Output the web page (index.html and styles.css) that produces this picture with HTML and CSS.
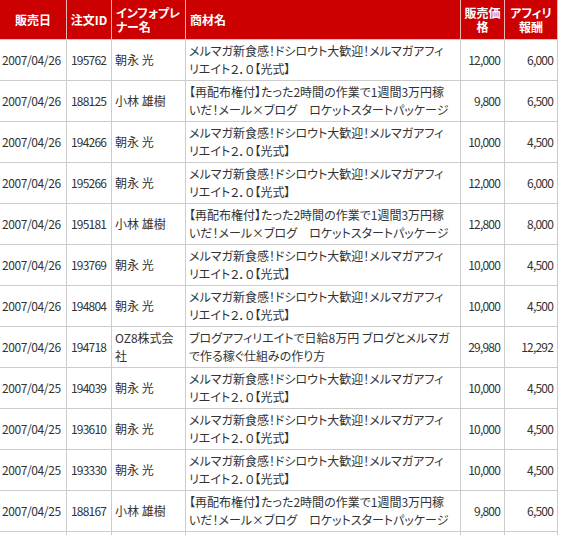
FILE: index.html
```html
<!DOCTYPE html>
<html lang="ja">
<head>
<meta charset="utf-8">
<title>販売履歴</title>
<link rel="stylesheet" href="styles.css">
</head>
<body>
<table class="orders">
  <colgroup>
    <col class="c-date">
    <col class="c-id">
    <col class="c-name">
    <col class="c-item">
    <col class="c-price">
    <col class="c-fee">
  </colgroup>
  <thead>
    <tr>
      <th class="h-center">販売日</th>
      <th class="h-center">注文ID</th>
      <th class="h-left">インフォプレ<br>ナー名</th>
      <th class="h-left">商材名</th>
      <th class="h-center">販売価<br>格</th>
      <th class="h-center">アフィリ<br>報酬</th>
    </tr>
  </thead>
  <tbody>
    <tr>
      <td class="date">2007/04/26</td><td class="id">195762</td><td class="name">朝永 光</td>
      <td class="item">メルマガ新食感！ドシロウト大歓迎！メルマガアフィ<br>リエイト２．０【光式】</td>
      <td class="num">12,000</td><td class="num">6,000</td>
    </tr>
    <tr>
      <td class="date">2007/04/26</td><td class="id">188125</td><td class="name">小林 雄樹</td>
      <td class="item">【再配布権付】たった2時間の作業で1週間3万円稼<br>いだ！メール×ブログ　ロケットスタートパッケージ</td>
      <td class="num">9,800</td><td class="num">6,500</td>
    </tr>
    <tr>
      <td class="date">2007/04/26</td><td class="id">194266</td><td class="name">朝永 光</td>
      <td class="item">メルマガ新食感！ドシロウト大歓迎！メルマガアフィ<br>リエイト２．０【光式】</td>
      <td class="num">10,000</td><td class="num">4,500</td>
    </tr>
    <tr>
      <td class="date">2007/04/26</td><td class="id">195266</td><td class="name">朝永 光</td>
      <td class="item">メルマガ新食感！ドシロウト大歓迎！メルマガアフィ<br>リエイト２．０【光式】</td>
      <td class="num">12,000</td><td class="num">6,000</td>
    </tr>
    <tr>
      <td class="date">2007/04/26</td><td class="id">195181</td><td class="name">小林 雄樹</td>
      <td class="item">【再配布権付】たった2時間の作業で1週間3万円稼<br>いだ！メール×ブログ　ロケットスタートパッケージ</td>
      <td class="num">12,800</td><td class="num">8,000</td>
    </tr>
    <tr>
      <td class="date">2007/04/26</td><td class="id">193769</td><td class="name">朝永 光</td>
      <td class="item">メルマガ新食感！ドシロウト大歓迎！メルマガアフィ<br>リエイト２．０【光式】</td>
      <td class="num">10,000</td><td class="num">4,500</td>
    </tr>
    <tr>
      <td class="date">2007/04/26</td><td class="id">194804</td><td class="name">朝永 光</td>
      <td class="item">メルマガ新食感！ドシロウト大歓迎！メルマガアフィ<br>リエイト２．０【光式】</td>
      <td class="num">10,000</td><td class="num">4,500</td>
    </tr>
    <tr>
      <td class="date">2007/04/26</td><td class="id">194718</td><td class="name">OZ8株式会<br>社</td>
      <td class="item">ブログアフィリエイトで日給8万円 ブログとメルマガ<br>で作る稼ぐ仕組みの作り方</td>
      <td class="num">29,980</td><td class="num">12,292</td>
    </tr>
    <tr>
      <td class="date">2007/04/25</td><td class="id">194039</td><td class="name">朝永 光</td>
      <td class="item">メルマガ新食感！ドシロウト大歓迎！メルマガアフィ<br>リエイト２．０【光式】</td>
      <td class="num">10,000</td><td class="num">4,500</td>
    </tr>
    <tr>
      <td class="date">2007/04/25</td><td class="id">193610</td><td class="name">朝永 光</td>
      <td class="item">メルマガ新食感！ドシロウト大歓迎！メルマガアフィ<br>リエイト２．０【光式】</td>
      <td class="num">10,000</td><td class="num">4,500</td>
    </tr>
    <tr>
      <td class="date">2007/04/25</td><td class="id">193330</td><td class="name">朝永 光</td>
      <td class="item">メルマガ新食感！ドシロウト大歓迎！メルマガアフィ<br>リエイト２．０【光式】</td>
      <td class="num">10,000</td><td class="num">4,500</td>
    </tr>
    <tr>
      <td class="date">2007/04/25</td><td class="id">188167</td><td class="name">小林 雄樹</td>
      <td class="item">【再配布権付】たった2時間の作業で1週間3万円稼<br>いだ！メール×ブログ　ロケットスタートパッケージ</td>
      <td class="num">9,800</td><td class="num">6,500</td>
    </tr>
    <tr>
      <td class="date"></td><td class="id"></td><td class="name"></td>
      <td class="item"></td>
      <td class="num"></td><td class="num"></td>
    </tr>
  </tbody>
</table>
</body>
</html>
```

FILE: styles.css
```css
html, body {
  margin: 0;
  padding: 0;
  background: #ffffff;
}

body {
  font-family: "Noto Sans CJK JP", "Liberation Sans", sans-serif;
  font-size: 12px;
  color: #333333;
  font-feature-settings: "palt";
}

.orders {
  border-collapse: separate;
  border-spacing: 0;
  table-layout: fixed;
  width: 558px;
}

.c-date { width: 67px; }
.c-id { width: 45px; }
.c-name { width: 74px; }
.c-item { width: 275px; }
.c-price { width: 44px; }
.c-fee { width: 53px; }

.orders th,
.orders td {
  box-sizing: border-box;
  border-right: 1px solid #cccccc;
  border-bottom: 1px solid #cccccc;
  padding: 2px 3px;
  vertical-align: middle;
}

.orders th {
  background: #cc0000;
  color: #ffffff;
  font-weight: bold;
  height: 40px;
  line-height: 14px;
  border-right-color: #eeb4b4;
}

.orders th.h-center { text-align: center; }
.orders th.h-left { text-align: left; padding-left: 4px; }

.orders td {
  height: 41px;
  line-height: 18px;
  white-space: nowrap;
  overflow: hidden;
}

.orders td.date { padding-left: 2px; letter-spacing: -0.4px; }
.orders td.id { padding-left: 4px; letter-spacing: -0.8px; }
.orders td.name { padding-left: 3px; }
.orders td.item { padding-left: 3px; }
.orders td.num { text-align: right; padding-right: 4px; letter-spacing: -0.8px; }
```
